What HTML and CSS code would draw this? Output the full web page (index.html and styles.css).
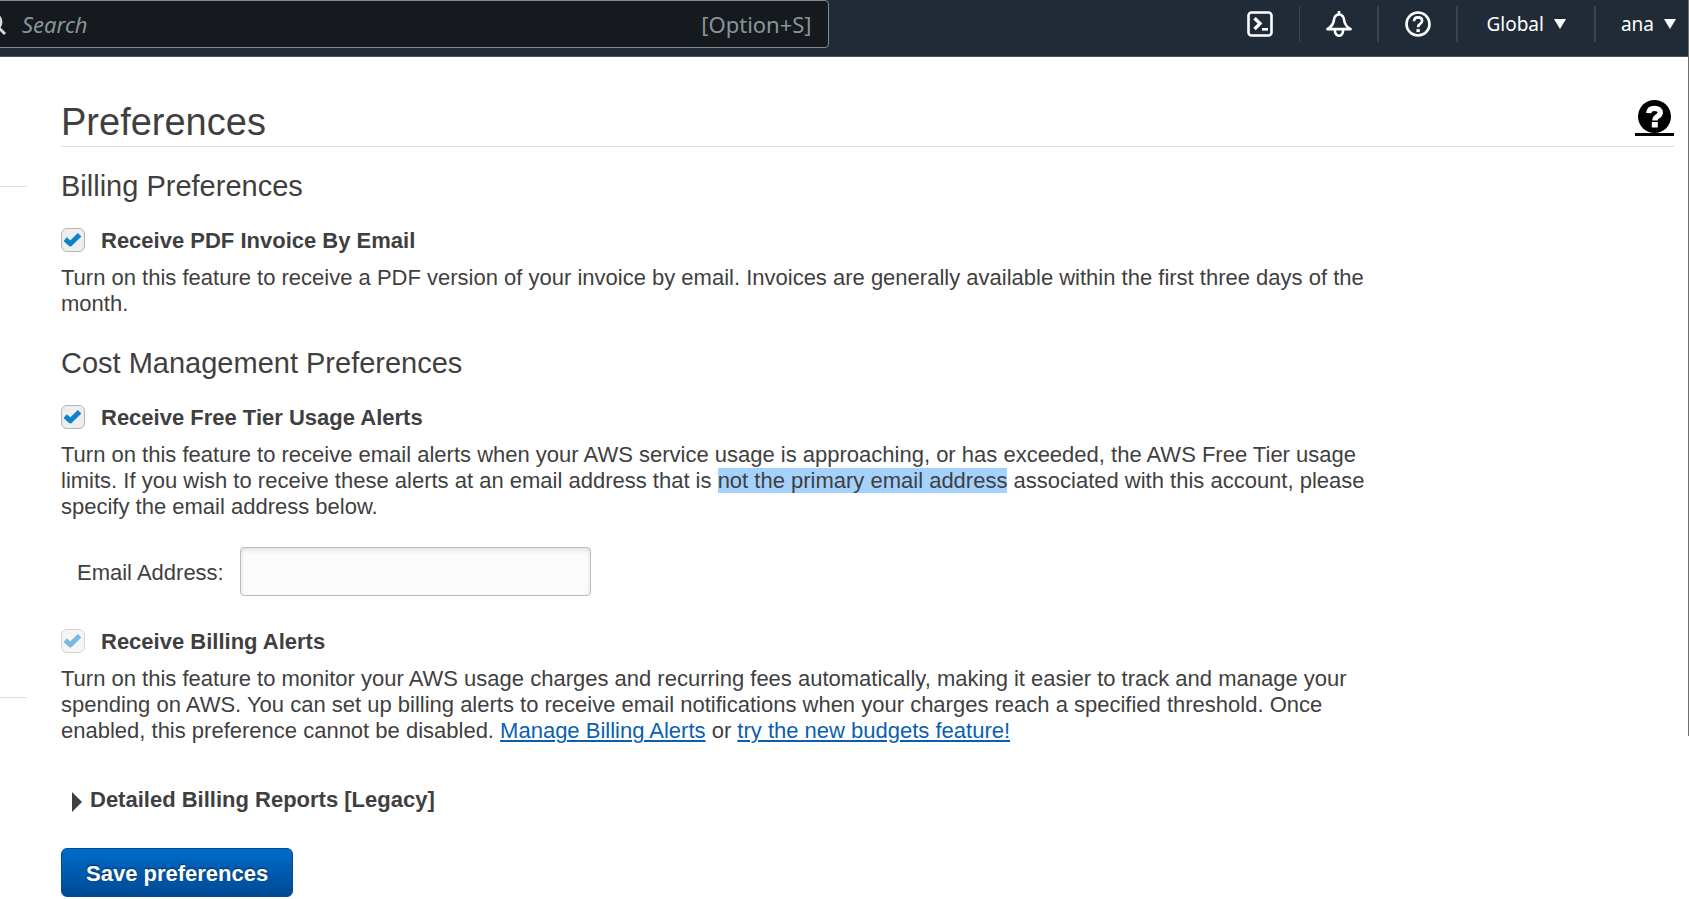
FILE: index.html
```html
<!DOCTYPE html>
<html lang="en">
<head>
<meta charset="utf-8">
<title>Preferences</title>
<meta name="viewport" content="width=device-width, initial-scale=1">
<link rel="stylesheet" href="styles.css">
</head>
<body>
<header class="topbar">
  <form class="search" role="search">
    <svg class="search-icon" viewBox="0 0 24 24" aria-hidden="true"><circle cx="10" cy="10" r="8"/><path d="M15.5 15.5 22 22"/></svg>
    <input class="search-input" type="search" placeholder="Search" aria-label="Search">
    <span class="search-hint">[Option+S]</span>
  </form>
  <nav class="tools" aria-label="Account tools">
    <button class="tool" type="button" aria-label="CloudShell">
      <svg class="tool-icon" viewBox="0 0 26 26" aria-hidden="true"><rect x="1.500" y="1.500" width="23" height="23" rx="3"/><path class="heavy" d="M7.500 7.200 13 12.600 7.500 18"/><path d="M15 18.300h6"/></svg>
    </button>
    <button class="tool" type="button" aria-label="Notifications">
      <svg class="tool-icon" viewBox="0 0 26 26" aria-hidden="true"><path d="M13 3.200C9.800 3.800 8.200 6 7.900 9c-.4 4.200-2 6.500-6.500 9.100h23.200C20.100 15.500 18.500 13.200 18.100 9c-.3-3-1.900-5.200-5.100-5.800ZM13 0v3M8.800 19c.2 3.600 1.800 5.700 4.200 5.700s4-2.100 4.200-5.700"/></svg>
    </button>
    <button class="tool" type="button" aria-label="Support">
      <svg class="tool-icon" viewBox="0 0 26 26" aria-hidden="true"><circle cx="13" cy="13" r="11.500"/><path d="M9 10.300c0-2.500 1.600-3.900 4.100-3.900 2.300 0 4 1.300 4 3.300 0 1.500-.7 2.300-2 3.100-1.500 1-2 1.500-2 3.500"/><path class="heavy" d="M13.100 18.100v3"/></svg>
    </button>
    <button class="menu" type="button">Global<svg class="caret" viewBox="0 0 12 10" aria-hidden="true"><path d="M0 0h12L6 10Z"/></svg></button>
    <button class="menu" type="button">ana<svg class="caret" viewBox="0 0 12 10" aria-hidden="true"><path d="M0 0h12L6 10Z"/></svg></button>
  </nav>
</header>
<div class="layout">
  <aside class="side" aria-hidden="true"><div class="side-group"></div></aside>
  <main class="content">
    <div class="title-row">
      <h1 class="title">Preferences</h1>
      <a class="help" href="#help" aria-label="Help">
        <svg class="help-icon" viewBox="0 0 33 33" aria-hidden="true"><circle cx="16.500" cy="16.500" r="16.500"/><path d="M10.800 13.200c.2-3.200 2.300-4.800 5.700-4.800s5.700 1.600 5.700 4.200c0 1.900-1 2.900-2.700 3.900-1.900 1.100-2.600 1.800-2.600 4"/><path class="dot" d="M13.800 22h6v5.500h-6z"/></svg>
      </a>
    </div>

    <form class="prefs">
      <section>
        <h2 class="heading">Billing Preferences</h2>
        <label class="option">
          <span class="box"><input class="box-input" type="checkbox" checked><svg class="tick" viewBox="0 0 24 24" aria-hidden="true"><path d="M4.200 11.200 9.400 15.800 18.600 6.700"/></svg></span>
          Receive PDF Invoice By Email
        </label>
        <p class="text">Turn on this feature to receive a PDF version of your invoice by email. Invoices are generally available within the first three days of the month.</p>
      </section>

      <section class="cost">
        <h2 class="heading">Cost Management Preferences</h2>
        <label class="option">
          <span class="box"><input class="box-input" type="checkbox" checked><svg class="tick" viewBox="0 0 24 24" aria-hidden="true"><path d="M4.200 11.200 9.400 15.800 18.600 6.700"/></svg></span>
          Receive Free Tier Usage Alerts
        </label>
        <p class="text">Turn on this feature to receive email alerts when your AWS service usage is approaching, or has exceeded, the AWS Free Tier usage limits. If you wish to receive these alerts at an email address that is <mark class="selected">not the primary email address</mark> associated with this account, please specify the email address below.</p>
        <div class="field">
          <label class="field-label" for="email">Email Address:</label>
          <input class="field-input" id="email" type="email">
        </div>
        <label class="option">
          <span class="box box-disabled"><input class="box-input" type="checkbox" checked disabled><svg class="tick" viewBox="0 0 24 24" aria-hidden="true"><path d="M4.200 11.200 9.400 15.800 18.600 6.700"/></svg></span>
          Receive Billing Alerts
        </label>
        <p class="text">Turn on this feature to monitor your AWS usage charges and recurring fees automatically, making it easier to track and manage your spending on AWS. You can set up billing alerts to receive email notifications when your charges reach a specified threshold. Once enabled, this preference cannot be disabled. <a class="link" href="#alerts">Manage Billing Alerts</a> or <a class="link" href="#budgets">try the new budgets feature!</a></p>
      </section>

      <button class="expander" type="button" aria-expanded="false"><svg class="expander-icon" viewBox="0 0 10 20" aria-hidden="true"><path d="M0 0 10 10 0 20Z"/></svg>Detailed Billing Reports [Legacy]</button>
      <button class="save" type="submit">Save preferences</button>
    </form>
  </main>
</div>
<div class="edge"></div>
</body>
</html>
```
FILE: styles.css
```css
* {
  box-sizing: border-box;
}

body {
  margin: 0;
  background: #fff;
  color: #3f3f3f;
  font: 22px/26px "Liberation Sans", Arial, sans-serif;
}

button,
input {
  margin: 0;
  font: inherit;
  color: inherit;
}

button {
  border: 0;
  background: none;
  cursor: pointer;
}

h1,
h2,
p {
  margin: 0;
  font-weight: 400;
}

/* Top bar */
.topbar {
  display: flex;
  justify-content: space-between;
  height: 57px;
  border-bottom: 1px solid #4b5560;
  background: #202b37;
  color: #fff;
  font-family: "Noto Sans", "Open Sans", sans-serif;
  overflow: hidden;
}

.search {
  display: flex;
  align-items: center;
  width: calc(49% + 21px);
  height: 48px;
  margin-left: -20px;
  padding: 0 16px 0 2px;
  border: 1px solid #7b8f8e;
  border-radius: 4px;
  background: #16191e;
}

.search-icon {
  flex: none;
  width: 24px;
  height: 24px;
  fill: none;
  stroke: #d5dbdb;
  stroke-width: 3;
}

.search-input {
  flex: 1;
  min-width: 0;
  padding: 0 0 0 15px;
  border: 0;
  outline: 0;
  background: none;
  color: #fff;
}

.search-input::placeholder {
  color: #879695;
  font-style: italic;
  opacity: 1;
}

.search-hint {
  color: #879695;
}

.tools {
  display: flex;
  align-items: flex-start;
  padding-top: 6px;
  font-size: 19px;
}

.tool,
.menu {
  display: flex;
  align-items: center;
  justify-content: center;
  height: 36px;
  padding: 0;
  border-right: 2px solid #3b434c;
}

.tool {
  width: 79px;
}

.tool:first-child {
  border-right-width: 1px;
}

.tool-icon {
  width: 26px;
  height: 26px;
  fill: none;
  stroke: #fff;
  stroke-width: 2.6;
  stroke-linejoin: round;
}

.heavy {
  stroke-width: 3.4;
  stroke-linejoin: miter;
}

.menu {
  gap: 10px;
  padding: 0 28px;
}

.menu:last-child {
  padding: 0 13px 0 25px;
  border-right: 0;
}

.caret {
  width: 12px;
  height: 10px;
  fill: #fff;
}

/* Page */
.layout {
  display: flex;
}

.side {
  flex: none;
  width: 27px;
  padding-top: 129px;
}

.side-group {
  height: 512px;
  border: solid #dcdfdf;
  border-width: 1px 0;
}

.content {
  flex: 1;
  min-width: 0;
  padding: 43px 15px 0 34px;
}

.title-row {
  display: flex;
  justify-content: space-between;
  align-items: flex-start;
  height: 47px;
  border-bottom: 1px solid #dcdfdf;
}

.title {
  font-size: 38px;
  line-height: 44px;
}

.help {
  display: flex;
  justify-content: center;
  width: 39px;
  border-bottom: 3px solid #000;
}

.help-icon {
  width: 33px;
  height: 33px;
  fill: #000;
}

.help-icon path {
  fill: none;
  stroke: #fff;
  stroke-width: 5.4;
}

.help-icon .dot {
  fill: #fff;
  stroke: none;
}

.prefs {
  display: flex;
  flex-direction: column;
  align-items: flex-start;
  padding-top: 23px;
}

.cost {
  margin-top: 30px;
}

.heading {
  margin-bottom: 26px;
  font-size: 29px;
  line-height: 32px;
}

.option {
  display: flex;
  align-items: center;
  gap: 16px;
  margin-bottom: 11px;
  font-weight: 700;
}

.box {
  display: grid;
  width: 24px;
  height: 26px;
}

.box-input,
.tick {
  grid-area: 1 / 1;
  width: 24px;
  height: 24px;
}

.box-input {
  appearance: none;
  border: 1px solid #b4b4b4;
  border-radius: 6px;
  background: #eee;
}

.tick {
  visibility: hidden;
  pointer-events: none;
  fill: none;
  stroke: #0a82ce;
  stroke-width: 5;
  stroke-linejoin: round;
}

.box-input:checked + .tick {
  visibility: visible;
}

.box-disabled {
  opacity: 0.55;
}

.text {
  max-width: 1340px;
}

.selected {
  background: #a5d2fd;
  color: inherit;
}

.field {
  display: flex;
  align-items: center;
  gap: 16px;
  margin: 27px 0 33px;
  padding-left: 16px;
}

.field-label {
  padding-top: 3px;
}

.field-input {
  width: 351px;
  height: 49px;
  padding: 0 12px;
  border: 1px solid #bbb;
  border-radius: 4px;
  background: #fcfcfc;
  box-shadow: inset 0 2px 5px rgba(0, 0, 0, 0.12);
}

.link {
  color: #0a5fb4;
  text-decoration-thickness: 2px;
  text-underline-offset: 2px;
}

.expander {
  display: flex;
  align-items: center;
  gap: 8px;
  margin-top: 43px;
  padding: 0 0 0 11px;
  font-weight: 700;
}

.expander-icon {
  width: 10px;
  height: 20px;
  margin-top: 4px;
  fill: #3f3f3f;
}

.save {
  margin-top: 35px;
  padding: 12px 24px 9px;
  border: 1px solid #004b91;
  border-radius: 6px;
  background: linear-gradient(#006bcb, #004a94);
  color: #fff;
  font-weight: 700;
  text-shadow: 0 -1px 2px rgba(0, 0, 0, 0.5);
}

/* Window edge */
.edge {
  position: absolute;
  top: 0;
  right: 0;
  width: 1px;
  height: 736px;
  background: #6f6f6f;
}
```
